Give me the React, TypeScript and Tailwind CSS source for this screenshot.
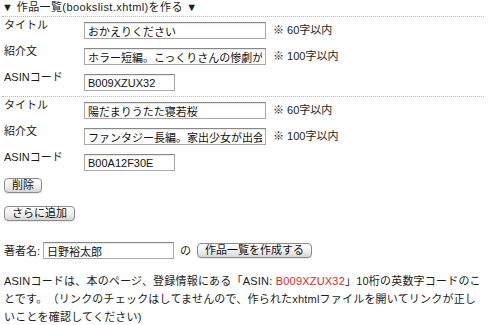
import React from "react";

const inputCls =
  "h-[17px] border border-[#a8a8a8] border-t-[#888888] bg-white px-[3px] text-[11px] leading-[15px] text-[#111] outline-none shadow-[inset_0_1px_1px_rgba(0,0,0,0.1)]";
const btnCls =
  "h-[15px] rounded-[4px] border border-[#8c8c8c] bg-linear-to-b from-white via-[#f1f1f1] to-[#d6d6d6] px-[7px] text-[11px] leading-[13px] text-[#111] shadow-[0_1px_0_rgba(0,0,0,0.08)]";

function Row({
  label,
  value,
  width,
  note,
}: {
  label: string;
  value: string;
  width: string;
  note?: string;
}) {
  return (
    <div className="flex h-[26px] items-start">
      <span className="w-[80px] pt-[1px] leading-[14px]">{label}</span>
      <input className={`${inputCls} mt-[5px] ${width}`} defaultValue={value} />
      {note && <span className="ml-[7px] mt-[5px] leading-[17px]">{note}</span>}
    </div>
  );
}

function Group({ t, d, a }: { t: string; d: string; a: string }) {
  return (
    <div className="-ml-[2px] w-[482px] border-t border-dotted border-[#b8b8b8] pb-[1px] pl-[2px]">
      <Row label="タイトル" value={t} width="w-[182px]" note="※ 60字以内" />
      <Row label="紹介文" value={d} width="w-[182px]" note="※ 100字以内" />
      <Row label="ASINコード" value={a} width="w-[91px]" />
    </div>
  );
}

export default function App() {
  return (
    <div
      className="h-[325px] w-[488px] overflow-hidden bg-white pl-[4px] text-[11px] text-[#1c1c1c]"
      style={{ fontFamily: '"Liberation Sans", "Noto Sans CJK JP", sans-serif' }}
    >
      <div className="-ml-[2px] h-[16px] leading-[14px] tracking-[0.4px]">▼ 作品一覧(bookslist.xhtml)を作る ▼</div>
      <Group t="おかえりください" d="ホラー短編。こっくりさんの惨劇が始まる" a="B009XZUX32" />
      <Group t="陽だまりうたた寝若桜" d="ファンタジー長編。家出少女が出会う" a="B00A12F30E" />
      <div className="mt-[2px] flex">
        <button className={btnCls}>削除</button>
      </div>
      <div className="mt-[13px] flex">
        <button className={btnCls}>さらに追加</button>
      </div>
      <div className="mt-[21px] flex items-center">
        <span className="leading-[14px]">著者名:</span>
        <input className={`${inputCls} ml-[3px] w-[131px]`} defaultValue="日野裕太郎" />
        <span className="ml-[6px] leading-[14px]">の</span>
        <button className={`${btnCls} ml-[6px]`}>作品一覧を作成する</button>
      </div>
      <p className="mt-[13px] w-[482px] whitespace-nowrap leading-[18px] tracking-[0.2px]">
        ASINコードは、本のページ、登録情報にある「ASIN: <span className="text-[#e3251e]">B009XZUX32</span>」10桁の英数字コードのこ
        <br />
        とです。　（リンクのチェックはしてませんので、作られたxhtmlファイルを開いてリンクが正し
        <br />
        いことを確認してください)
      </p>
    </div>
  );
}
